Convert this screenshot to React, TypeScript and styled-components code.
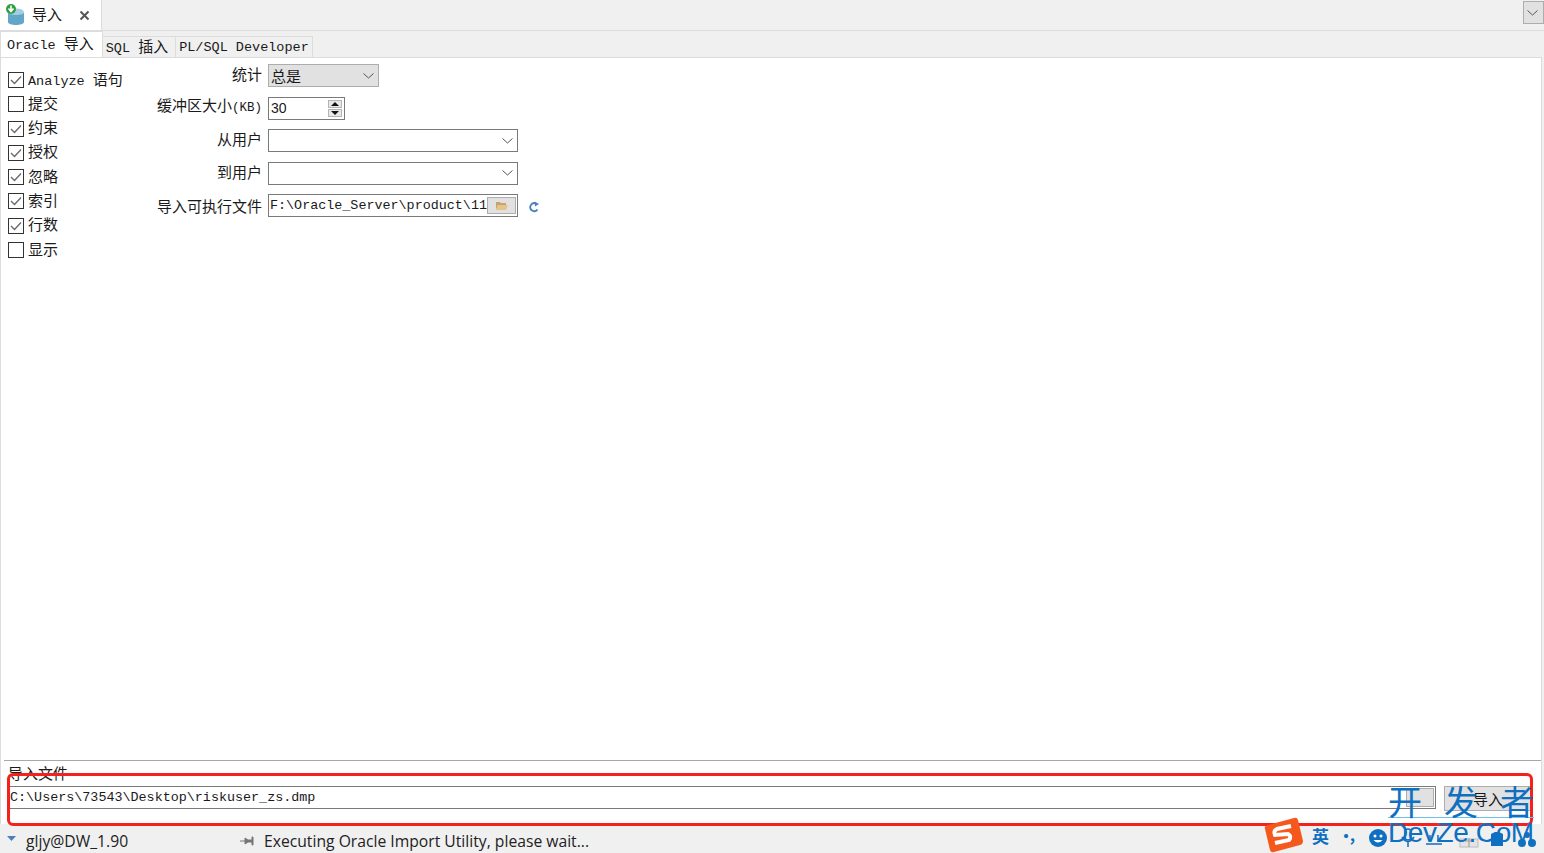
import React from 'react';
import styled, { createGlobalStyle } from 'styled-components';

const GlobalStyle = createGlobalStyle`
  html, body {
    margin: 0;
    padding: 0;
    background: #f0f0f0;
  }

  * {
    box-sizing: border-box;
  }
`;

const mono = `"Liberation Mono", "Noto Sans CJK SC", monospace`;
const cjk = `"Noto Sans CJK SC", "Liberation Mono", monospace`;

const Window = styled.div`
  position: relative;
  display: flex;
  flex-direction: column;
  width: 1544px;
  height: 853px;
  overflow: hidden;
  background: #f0f0f0;
  color: #1a1a1a;
  font-family: ${mono};
`;

const DocBar = styled.div`
  display: flex;
  justify-content: space-between;
  height: 31px;
  flex-shrink: 0;
  border-bottom: 1px solid #dcdcdc;
`;

const DocTab = styled.div`
  display: flex;
  align-items: center;
  width: 102px;
  height: 30px;
  padding-left: 5px;
  background: #fff;
  border-right: 1px solid #dcdcdc;
  font-family: ${cjk};
  font-size: 15px;
`;

const DocTitle = styled.span`
  width: 47px;
  margin: 0 0 4px 7px;
`;

const CloseIcon = styled.svg`
  width: 11px;
  height: 11px;
`;

const MenuButton = styled.button`
  display: flex;
  align-items: center;
  justify-content: center;
  width: 21px;
  height: 23px;
  margin: 1px 0 0;
  padding: 0;
  background: #e1e1e1;
  border: 1px solid #adadad;
`;

const TabStrip = styled.div`
  display: flex;
  align-items: flex-end;
  height: 26px;
  flex-shrink: 0;
`;

const TabItem = styled.div<{ $active?: boolean }>`
  display: flex;
  align-items: center;
  height: ${props => (props.$active ? '26px' : '21px')};
  padding: ${props => (props.$active ? '0 8px 0 6px' : '0 7px 0 3px')};
  background: ${props => (props.$active ? '#fff' : '#f0f0f0')};
  border: 1px solid #dcdcdc;
  border-bottom: none;
  border-left: ${props => (props.$active ? '1px solid #dcdcdc' : 'none')};
  font-size: 13.5px;
  white-space: pre;

  &:last-child {
    padding-right: 3px;
  }
`;

const TabLabel = styled.span`
  line-height: 18px;
`;

const Han = styled.span`
  font-family: ${cjk};
  font-size: 15px;
  line-height: 18px;
`;

const Panel = styled.div`
  display: flex;
  flex-direction: column;
  flex: 1;
  margin-right: 2px;
  background: #fff;
  border: 1px solid #dcdcdc;
  border-bottom: none;
`;

const Content = styled.div`
  display: flex;
  flex: 1;
  padding: 6px 0 0 7px;
`;

const OptionList = styled.div`
  display: flex;
  flex-direction: column;
  width: 143px;
  padding-top: 8px;
  gap: 8.3px;
`;

const Option = styled.label`
  display: flex;
  align-items: center;
  height: 16px;
  font-size: 13.5px;
`;

const OptionText = styled.span`
  white-space: pre;
  line-height: 18px;
`;

const Box = styled.span`
  display: flex;
  align-items: center;
  justify-content: center;
  width: 16px;
  height: 16px;
  margin-right: 4px;
  background: #fff;
  border: 1px solid #333;
`;

const Form = styled.div`
  display: grid;
  grid-template-columns: 111px max-content max-content;
  grid-auto-rows: 23px;
  row-gap: 9.6px;
  column-gap: 6px;
  align-items: center;
  align-content: start;
  justify-items: start;
`;

const FieldLabel = styled.div<{ $low?: boolean }>`
  justify-self: end;
  grid-column: 1;
  margin-bottom: ${props => (props.$low ? '0' : '3px')};
  font-family: ${cjk};
  font-size: 15px;
  line-height: 20px;
  white-space: pre;
`;

const Mixed = styled.span`
  font-family: ${mono};
  font-size: 12.5px;
`;

const Field = styled.div<{ $width: number; $filled?: boolean }>`
  grid-column: 2;
  display: flex;
  align-items: center;
  justify-content: space-between;
  width: ${props => props.$width}px;
  height: 23px;
  padding: 0 1px 0 2px;
  background: ${props => (props.$filled ? '#e1e1e1' : '#fff')};
  border: 1px solid ${props => (props.$filled ? '#adadad' : '#7a7a7a')};
  overflow: hidden;
`;

const FieldText = styled.span`
  font-family: ${cjk};
  font-size: 15px;
`;

const NumberText = styled.span`
  font-family: "Liberation Sans", sans-serif;
  font-size: 14px;
`;

const PathText = styled.span`
  font-size: 13.4px;
  margin-left: -1px;
  white-space: pre;
  overflow: hidden;
`;

const Chevron = styled.svg`
  flex-shrink: 0;
  width: 11px;
  height: 6px;
  margin-right: 3px;
`;

const Spinner = styled.div`
  display: flex;
  flex-direction: column;
  gap: 1px;
  margin-right: 1px;
`;

const SpinButton = styled.div`
  display: flex;
  align-items: center;
  justify-content: center;
  width: 14px;
  height: 8px;
  background: #e8e8e8;
  border: 1px solid #b4b4b4;
`;

const BrowseButton = styled.div`
  display: flex;
  flex-shrink: 0;
  align-items: center;
  justify-content: center;
  width: 29px;
  height: 17px;
  background: #e1e1e1;
  border: 1px solid #adadad;
`;

const RefreshIcon = styled.svg`
  width: 12px;
  height: 12px;
  margin: 3px 0 0 4px;
`;

const ImportSection = styled.div`
  display: flex;
  flex-direction: column;
  height: 64px;
  margin-left: 3px;
  border-top: 1px solid #a8a8a8;
`;

const ImportLabel = styled.div`
  height: 25px;
  padding: 2px 0 0 4px;
  font-family: ${cjk};
  font-size: 15px;
  line-height: 20px;
`;

const ImportRow = styled.div`
  display: flex;
  padding-left: 4px;
`;

const ImportInput = styled.div`
  display: flex;
  align-items: center;
  width: 1428px;
  height: 23px;
  padding: 0 0 0 1px;
  border: 1px solid #7a7a7a;
  font-size: 13.4px;
  white-space: pre;
`;

const ImportBrowse = styled.div`
  width: 28px;
  height: 19px;
  margin: 2px 0 0 -30px;
  background: #e1e1e1;
  border: 1px solid #adadad;
`;

const ImportButton = styled.div`
  display: flex;
  align-items: center;
  justify-content: center;
  width: 88px;
  height: 25px;
  margin-left: 10px;
  background: #e1e1e1;
  border: 1px solid #adadad;
  font-family: ${cjk};
  font-size: 15px;
`;

const StatusBar = styled.div`
  display: flex;
  align-items: center;
  height: 29px;
  flex-shrink: 0;
  padding-top: 4px;
  font-family: "Open Sans", "Liberation Sans", sans-serif;
  font-size: 15.7px;
  color: #222;
`;

const StatusCaret = styled.svg`
  width: 9px;
  height: 5px;
  margin: 0 10px 4px 7px;
`;

const StatusConnection = styled.span`
  width: 214px;
`;

const PinIcon = styled.svg`
  width: 14px;
  height: 10px;
  margin-right: 10px;
`;

const RedFrame = styled.div`
  position: absolute;
  left: 7px;
  top: 773px;
  width: 1526px;
  height: 53px;
  border: 3.5px solid #f5211c;
  border-radius: 6px;
`;

const Watermark = styled.div`
  position: absolute;
  left: 1388px;
  top: 783px;
  width: 146px;
  color: #0f6fc0;
  font-family: "Liberation Sans", sans-serif;
`;

const WatermarkTop = styled.div`
  display: flex;
  justify-content: space-between;
  height: 35px;
  border-bottom: 1px solid #6cc0ea;
  font-family: ${cjk};
  font-size: 34px;
  line-height: 36px;
`;

const WatermarkBottom = styled.div`
  font-size: 28px;
  line-height: 30px;
  letter-spacing: -0.4px;
  white-space: pre;
`;

const ImeBar = styled.div`
  position: absolute;
  left: 1264px;
  top: 817px;
  display: flex;
  align-items: center;
  width: 280px;
  height: 36px;
`;

const ImeLang = styled.span`
  margin-left: 9px;
  color: #0f6fc0;
  font-family: ${cjk};
  font-size: 17px;
  font-weight: 700;
`;

const ImePunct = styled.span`
  width: 38px;
  margin-left: 9px;
  color: #0f6fc0;
  font-family: ${cjk};
  font-size: 16px;
  font-weight: 700;
  letter-spacing: -6px;
  white-space: pre;
`;

const ImeIcon = styled.svg<{ $gap: number }>`
  flex-shrink: 0;
  width: 20px;
  height: 20px;
  margin: 6px 0 0 ${props => props.$gap}px;
`;

const options: { label: string; checked: boolean; latin?: string }[] = [
  { label: '语句', latin: 'Analyze ', checked: true },
  { label: '提交', checked: false },
  { label: '约束', checked: true },
  { label: '授权', checked: true },
  { label: '忽略', checked: true },
  { label: '索引', checked: true },
  { label: '行数', checked: true },
  { label: '显示', checked: false },
];

const ChevronDown = () => (
  <Chevron viewBox="0 0 11 6">
    <path d="M0.5 0.5 L5.5 5 L10.5 0.5" fill="none" stroke="#555" strokeWidth="1" />
  </Chevron>
);

const App = () => {
  return (
    <Window>
      <GlobalStyle />
      <DocBar>
        <DocTab>
          <svg width="20" height="22" viewBox="0 0 20 22">
            <ellipse cx="11" cy="8" rx="8" ry="3.5" fill="#a4cde0" />
            <path d="M3 8 V18 C3 22 19 22 19 18 V8 C19 12 3 12 3 8 Z" fill="#62a6c8" />
            <circle cx="6" cy="5" r="5" fill="#2f9e44" />
            <path d="M6 1.5 V6 M3.5 4.5 L6 7.5 L8.5 4.5" stroke="#fff" strokeWidth="1.6" fill="none" />
          </svg>
          <DocTitle>导入</DocTitle>
          <CloseIcon viewBox="0 0 11 11">
            <path d="M1.5 1.5 L9.5 9.5 M9.5 1.5 L1.5 9.5" stroke="#555" strokeWidth="2" />
          </CloseIcon>
        </DocTab>
        <MenuButton>
          <ChevronDown />
        </MenuButton>
      </DocBar>
      <TabStrip>
        <TabItem $active>
          <TabLabel>
            Oracle <Han>导入</Han>
          </TabLabel>
        </TabItem>
        <TabItem>
          <TabLabel>
            SQL <Han>插入</Han>
          </TabLabel>
        </TabItem>
        <TabItem>PL/SQL Developer</TabItem>
      </TabStrip>
      <Panel>
        <Content>
          <OptionList>
            {options.map(option => (
              <Option key={option.label}>
                <Box>
                  {option.checked && (
                    <svg width="12" height="10" viewBox="0 0 12 10">
                      <path d="M1 5 L4.5 8.5 L11 1.5" fill="none" stroke="#666" strokeWidth="1.3" />
                    </svg>
                  )}
                </Box>
                <OptionText>
                  {option.latin}
                  <Han>{option.label}</Han>
                </OptionText>
              </Option>
            ))}
          </OptionList>
          <Form>
            <FieldLabel>统计</FieldLabel>
            <Field $width={111} $filled>
              <FieldText>总是</FieldText>
              <ChevronDown />
            </Field>
            <FieldLabel>
              缓冲区大小<Mixed>(KB)</Mixed>
            </FieldLabel>
            <Field $width={77}>
              <NumberText>30</NumberText>
              <Spinner>
                <SpinButton>
                  <svg width="8" height="4" viewBox="0 0 8 4">
                    <path d="M0 4 L4 0 L8 4 Z" fill="#111" />
                  </svg>
                </SpinButton>
                <SpinButton>
                  <svg width="8" height="4" viewBox="0 0 8 4">
                    <path d="M0 0 L4 4 L8 0 Z" fill="#111" />
                  </svg>
                </SpinButton>
              </Spinner>
            </Field>
            <FieldLabel>从用户</FieldLabel>
            <Field $width={250}>
              <span />
              <ChevronDown />
            </Field>
            <FieldLabel>到用户</FieldLabel>
            <Field $width={250}>
              <span />
              <ChevronDown />
            </Field>
            <FieldLabel $low>导入可执行文件</FieldLabel>
            <Field $width={250}>
              <PathText>F:\Oracle_Server\product\11</PathText>
              <BrowseButton>
                <svg width="13" height="11" viewBox="0 0 13 11">
                  <path d="M1 2 H5 L6 3 H11 V5 H3 L1 10 Z" fill="#c8a468" />
                  <path d="M3 5 H13 L11 10 H1 Z" fill="#e4c48c" />
                </svg>
              </BrowseButton>
            </Field>
            <RefreshIcon viewBox="0 0 12 12">
              <path d="M9.5 8.5 A4 4 0 1 1 8 2.5" fill="none" stroke="#4a80bc" strokeWidth="1.8" />
              <path d="M6.5 0.5 L11 3 L7 5.5 Z" fill="#4a80bc" />
            </RefreshIcon>
          </Form>
        </Content>
        <ImportSection>
          <ImportLabel>导入文件</ImportLabel>
          <ImportRow>
            <ImportInput>C:\Users\73543\Desktop\riskuser_zs.dmp</ImportInput>
            <ImportBrowse />
            <ImportButton>导入</ImportButton>
          </ImportRow>
        </ImportSection>
      </Panel>
      <StatusBar>
        <StatusCaret viewBox="0 0 9 5">
          <path d="M0 0 H9 L4.5 5 Z" fill="#4a80bc" />
        </StatusCaret>
        <StatusConnection>gljy@DW_1.90</StatusConnection>
        <PinIcon viewBox="0 0 14 10">
          <path d="M0 5 H5 M5 2 L8 4 H12 V1 H13 V9 H12 V6 H8 L5 8 Z" fill="#777" stroke="#777" />
        </PinIcon>
        Executing Oracle Import Utility, please wait...
      </StatusBar>
      <RedFrame />
      <ImeBar>
        <svg width="39" height="36" viewBox="0 0 39 36">
          <path d="M4 8 L30 1 Q33 0 34 3 L39 24 Q39 27 36 28 L10 35 Q7 36 6 33 L1 12 Q0 9 4 8 Z" fill="#f4581c" />
          <path d="M27 9 L13 12 Q9 14 11 18 L24 17 Q28 19 25 23 L11 26" fill="none" stroke="#fff" strokeWidth="4" />
        </svg>
        <ImeLang>英</ImeLang>
        <ImePunct>·，</ImePunct>
        <ImeIcon $gap={-8} viewBox="0 0 20 20">
          <circle cx="10" cy="10" r="9" fill="#0f6fc0" />
          <circle cx="7" cy="8" r="1.5" fill="#fff" />
          <circle cx="13" cy="8" r="1.5" fill="#fff" />
          <path d="M5.5 12 Q10 17 14.5 12" fill="#fff" />
        </ImeIcon>
        <ImeIcon $gap={10} viewBox="0 0 20 20">
          <rect x="7" y="1" width="6" height="11" rx="3" fill="none" stroke="#0f6fc0" strokeWidth="1.5" />
          <path d="M4 9 Q10 18 16 9 M10 14 V19" fill="none" stroke="#0f6fc0" strokeWidth="1.5" />
        </ImeIcon>
        <ImeIcon $gap={6} viewBox="0 0 20 20">
          <path d="M2 16 H18 M6 7 V14 M14 7 V14" fill="none" stroke="#0f6fc0" strokeWidth="1.5" />
        </ImeIcon>
        <ImeIcon $gap={15} viewBox="0 0 20 20">
          <rect x="1" y="11" width="18" height="8" fill="#e4e4e4" stroke="#bbb" />
          <path d="M10 10 V19 M6 13 H14" stroke="#999" fill="none" />
        </ImeIcon>
        <ImeIcon $gap={8} viewBox="0 0 20 20">
          <path d="M4 6 L8 4 H12 L16 6 V18 H4 Z" fill="#0f6fc0" />
        </ImeIcon>
        <ImeIcon $gap={10} viewBox="0 0 20 20">
          <circle cx="5" cy="15" r="4" fill="#0f6fc0" />
          <circle cx="15" cy="15" r="4" fill="#0f6fc0" />
          <circle cx="10" cy="7" r="3" fill="#0f6fc0" />
        </ImeIcon>
      </ImeBar>
      <Watermark>
        <WatermarkTop>
          <span>开</span>
          <span>发</span>
          <span>者</span>
        </WatermarkTop>
        <WatermarkBottom>DevZe.CoM</WatermarkBottom>
      </Watermark>
    </Window>
  );
};

export default App;
